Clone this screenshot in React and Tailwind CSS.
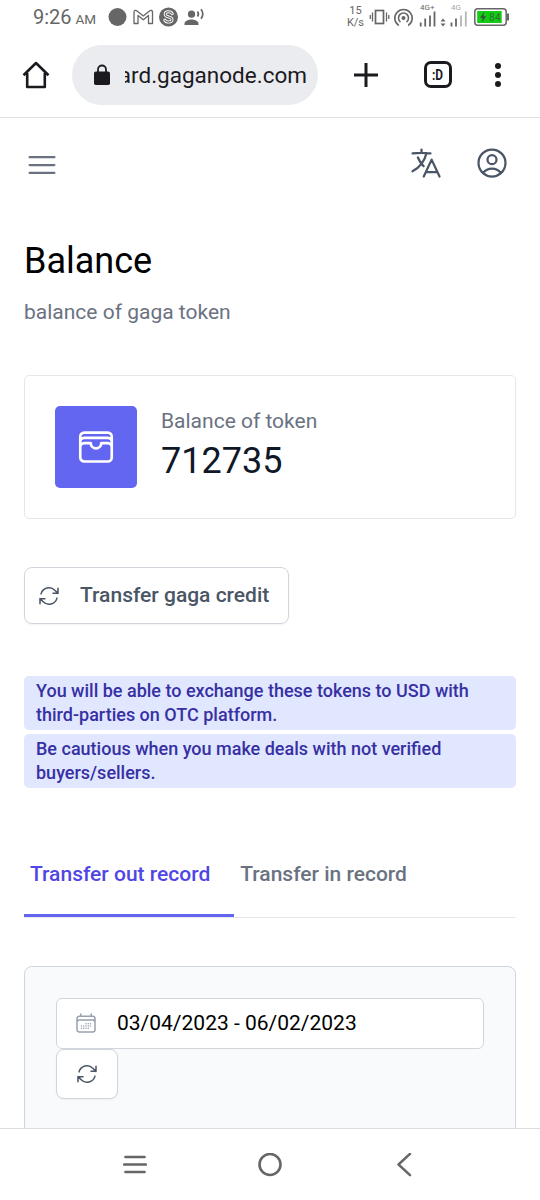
import React, { useState } from 'react';
import {
  HiOutlineArrowPath,
  HiOutlineBars3,
  HiOutlineCalendarDays,
  HiOutlineLanguage,
  HiOutlineUserCircle,
  HiOutlineWallet,
} from 'react-icons/hi2';

const notices = [
  'You will be able to exchange these tokens to USD with third-parties on OTC platform.',
  'Be cautious when you make deals with not verified buyers/sellers.',
];

const tabs = [
  { id: 'out', label: 'Transfer out record' },
  { id: 'in', label: 'Transfer in record' },
];

const StatusBar = () => (
  <div className="flex h-[34px] items-center justify-between pb-px pl-[33px] pr-[30px] text-[#666666]">
    <div className="flex items-center">
      <div className="flex items-baseline pt-px">
        <span className="w-[38px] text-[20px] leading-6 whitespace-nowrap">9:26</span>
        <span className="ml-[4.500px] w-[21px] text-[13.500px]">AM</span>
      </div>
      <svg className="ml-[11.500px]" width="98" height="20" viewBox="0 0 98 20" fill="none">
        <circle cx="9.5" cy="10" r="9" fill="#666666" />
        {/* Mail */}
        <path d="M26 16.500V5.200c0-1.800 1.800-2.400 3-1.300l6.300 5 6.200-5c1.300-1.100 3-.5 3 1.300v11.300h-4v-8l-5.200 4.300-5.300-4.300v8z" stroke="#666666" strokeWidth="1.300" strokeLinejoin="round" />
        <circle cx="60.500" cy="10" r="9.500" fill="#666666" />
        <path d="M64.200 6.700c-1.300-2.700-7-2.700-7 .6 0 3.500 6.800 1.900 6.800 5.300 0 3.100-5.700 3.400-7.200.4" stroke="#ffffff" strokeWidth="3" strokeLinecap="round" />
        <path d="M64.200 6.700c-1.300-2.700-7-2.700-7 .6 0 3.500 6.800 1.900 6.800 5.300 0 3.100-5.700 3.400-7.200.4" stroke="#666666" strokeWidth="1.100" strokeLinecap="round" />
        {/* Person speaking */}
        <circle cx="83.500" cy="7.200" r="3.600" fill="#666666" />
        <path d="M76.500 18v-1.500c0-2.800 4.500-4 7-4s7 1.200 7 4V18z" fill="#666666" />
        <path d="M89.500 4.500q1.800 2.500 0 5M93 2.300q3.600 4.700 0 9.400" stroke="#666666" strokeWidth="1.700" />
      </svg>
    </div>
    <div className="flex items-center">
      <div className="text-center text-[11px] leading-3">
        <div>15</div>
        <div>K/s</div>
      </div>
      <svg className="ml-[5px]" width="105" height="32" viewBox="0 0 105 32" fill="none" stroke="#666666">
        {/* Vibrate */}
        <rect x="6.500" y="9.500" width="8" height="13" strokeWidth="1.700" />
        <path d="M3.500 11.500v9M1.300 14v4M17.500 11.500v9M19.800 14v4" strokeWidth="1.300" />
        {/* Hotspot */}
        <circle cx="34.500" cy="17" r="2" fill="#666666" stroke="none" />
        <path d="M31.500 21a5 5 0 1 1 6 0M29.800 24.500a8.700 8.700 0 1 1 9.400 0" strokeWidth="1.600" />
        {/* Signals */}
        <path d="M51.700 25.500v-4M56.200 25.500v-8M61 25.500v-11M65.500 25.500v-15" strokeWidth="1.800" />
        <path d="M71.500 20.500l2.500-3 2.500 3zM71.500 22.500l2.500 3 2.500-3z" fill="#666666" stroke="none" />
        <path d="M82.500 25.500v-4M87 25.500v-8" strokeWidth="1.800" />
        <path d="M92 25.500v-11M96.800 25.500v-15" stroke="#b5b5b5" strokeWidth="1.800" />
        <text x="51" y="9" fill="#666666" stroke="none" fontSize="8">4G+</text>
        <text x="82" y="9" fill="#a8a8a8" stroke="none" fontSize="8">4G</text>
      </svg>
      <svg width="36" height="18" viewBox="0 0 36 18" fill="none">
        <rect x=".8" y=".8" width="31.400" height="16.400" rx="3" stroke="#666666" strokeWidth="1.500" />
        <path d="M34 5.500v7" stroke="#666666" strokeWidth="2" />
        <rect x="3.200" y="3" width="24.500" height="12" fill="#14cc14" />
        <path d="M10.300 4l-4.300 5.800h2.600l-.8 4.400 4.400-6h-2.700z" fill="#35523a" />
        <text x="15" y="12.800" fill="#2c7034" fontSize="10" letterSpacing=".5">84</text>
      </svg>
    </div>
  </div>
);

const BrowserBar = () => (
  <div className="flex h-[84px] items-center border-b border-[#dfe0e3] pb-[2px] pl-[22px] text-[#1b1b1f]">
    <svg width="28" height="28" viewBox="0 0 28 28" fill="none" stroke="currentColor" strokeWidth="2.600">
      <path d="M1.500 14.200L14 2l12.500 12.200M5.200 12v14h17.600V12" strokeLinejoin="round" />
    </svg>
    <div className="ml-[22px] flex h-[60px] w-[246px] items-center rounded-full bg-[#ebecf0] pl-[21px]">
      <svg width="18" height="22" viewBox="0 0 18 22" fill="none">
        <rect x="1" y="7.500" width="16" height="13.500" rx="1.800" fill="currentColor" />
        <path d="M5 8V5.500a4 4 0 0 1 8 0V8" stroke="currentColor" strokeWidth="1.800" />
      </svg>
      {/* Long hosts keep their end visible */}
      <div className="ml-[14px] flex w-[182px] justify-end overflow-hidden text-[22.500px] leading-[30px] whitespace-nowrap">
        <span>dashboard.gaganode.com</span>
      </div>
    </div>
    <svg className="ml-[36px]" width="24" height="24" viewBox="0 0 24 24" stroke="currentColor" strokeWidth="3">
      <path d="M12 0v24M0 12h24" />
    </svg>
    <div className="ml-[46px] flex h-[27px] w-[28px] items-center justify-center rounded-[7px] border-[3px] border-[#1b1b1f] text-[14px] font-bold leading-none">
      <span className="scale-x-85">:D</span>
    </div>
    <svg className="ml-[43px]" width="6" height="24" viewBox="0 0 6 24" fill="currentColor">
      <circle cx="3" cy="3" r="3" />
      <circle cx="3" cy="12" r="3" />
      <circle cx="3" cy="21" r="3" />
    </svg>
  </div>
);

const NavBar = () => (
  <div className="flex h-[72px] shrink-0 items-center justify-between border-t border-[#dcdde0] bg-white px-[123px] text-[#666666]">
    <svg width="24" height="24" viewBox="0 0 24 24" stroke="currentColor" strokeWidth="2.700" strokeLinecap="round">
      <path d="M2.500 4h19M1.300 11.500h21.400M2.500 19h19" />
    </svg>
    <svg width="24" height="24" viewBox="0 0 24 24" fill="none" stroke="currentColor" strokeWidth="2.600">
      <circle cx="12" cy="11.500" r="10.500" />
    </svg>
    <svg width="24" height="24" viewBox="0 0 24 24" fill="none" stroke="currentColor" strokeWidth="2.400" strokeLinecap="round" strokeLinejoin="round">
      <path d="M17 .8L5.500 11.500l11.500 10.700" />
    </svg>
  </div>
);

const App = () => {
  const [activeTab, setActiveTab] = useState('out');

  return (
    <div className="flex h-[1200px] w-[540px] flex-col overflow-hidden bg-white font-['Roboto',sans-serif]">
      <StatusBar />
      <BrowserBar />
      <div className="min-h-0 flex-1 overflow-hidden">
        <header className="flex h-[90px] items-center justify-between pl-6 pr-[30px]">
          <button type="button" aria-label="Open menu" className="mt-[3px] text-gray-500">
            <HiOutlineBars3 className="size-9" />
          </button>
          <div className="flex gap-[30px] text-gray-600">
            <HiOutlineLanguage className="size-9" />
            <HiOutlineUserCircle className="size-9" />
          </div>
        </header>

        <main className="px-6 pt-8">
          <h1 className="text-[36px] leading-[42px] text-black">Balance</h1>
          <p className="mt-[15px] text-[21px] leading-[30px] text-gray-500">balance of gaga token</p>

          {/* Token balance */}
          <div className="mt-12 flex h-[144px] rounded-[5px] border-[1.500px] border-gray-200 p-[30px]">
            <div className="flex size-[82px] items-center justify-center rounded-[5px] bg-[#6366f1] text-white">
              <HiOutlineWallet className="size-[42px]" />
            </div>
            <div className="ml-6">
              <p className="text-[21px] leading-[30px] text-gray-500">Balance of token</p>
              <p className="text-[36px] leading-[50px] text-gray-900">712735</p>
            </div>
          </div>

          <button
            type="button"
            className="mt-12 flex h-[57px] w-[265px] items-center rounded-[8px] border-[1.500px] border-gray-300 pl-[12px] text-[21px] font-medium text-gray-600 shadow-xs"
          >
            <HiOutlineArrowPath className="mr-[19px] size-6" />
            Transfer gaga credit
          </button>

          <div className="mt-[52px] space-y-1">
            {notices.map((notice) => (
              <p key={notice} className="h-[54px] rounded-[5px] bg-indigo-100 px-3 pt-[3px] text-[18px] font-medium leading-6 text-[#3730a3]">
                {notice}
              </p>
            ))}
          </div>

          {/* Record tabs */}
          <div className="mt-[57px] flex h-[73px] border-b border-gray-200">
            {tabs.map((tab) => (
              <button
                key={tab.id}
                type="button"
                onClick={() => setActiveTab(tab.id)}
                className={`flex h-[72px] items-start border-b-[3px] pl-[6px] pr-6 pt-[14px] text-[21px] font-medium leading-[30px] ${activeTab === tab.id ? 'border-[#6366f1] text-[#4f46e5]' : 'border-transparent text-gray-500'}`}
              >
                {tab.label}
              </button>
            ))}
          </div>

          {/* Date filter */}
          <div className="mt-12 h-[240px] rounded-[8px] border-[1.500px] border-gray-300 bg-gray-50 px-[31px] pt-[31px]">
            <div className="flex h-[51px] items-center rounded-[6px] border-[1.500px] border-gray-300 bg-white pb-[2px] pl-[17px]">
              <HiOutlineCalendarDays className="size-6 text-gray-400" />
              <span className="ml-[19px] text-[21px] leading-[30px] text-black">03/04/2023 - 06/02/2023</span>
            </div>
            <button
              type="button"
              aria-label="Refresh records"
              className="flex h-[50px] w-[62px] items-center justify-center rounded-[8px] border-[1.500px] border-gray-300 bg-white text-gray-600 shadow-xs"
            >
              <HiOutlineArrowPath className="size-6" />
            </button>
          </div>
        </main>
      </div>
      <NavBar />
    </div>
  );
};

export default App;
